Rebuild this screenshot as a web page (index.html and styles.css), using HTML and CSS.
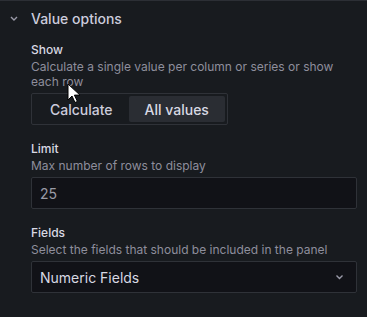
FILE: index.html
```html
<!DOCTYPE html>
<html lang="en">
    <head>
        <meta charset="UTF-8" />
        <meta name="viewport" content="width=device-width, initial-scale=1.0" />
        <title>Value options</title>
        <link rel="stylesheet" href="styles.css">
    </head>
    <body>
        <div class="category">
            <div class="category-header">
                <span class="chevron">
                    <svg width="8" height="5" viewBox="0 0 8 5">
                        <path d="M1 1l3 3 3-3" fill="none" stroke="currentColor" stroke-width="1.4" />
                    </svg>
                </span>
                <span class="category-title">Value options</span>
            </div>

            <div class="field">
                <div class="field-label">Show</div>
                <div class="field-desc">Calculate a single value per column or series or show each row</div>
                <div class="radio-group">
                    <button class="radio-btn">Calculate</button>
                    <button class="radio-btn active">All values</button>
                </div>
            </div>

            <div class="field">
                <div class="field-label">Limit</div>
                <div class="field-desc">Max number of rows to display</div>
                <input class="text-input" type="text" placeholder="25" />
            </div>

            <div class="field">
                <div class="field-label">Fields</div>
                <div class="field-desc">Select the fields that should be included in the panel</div>
                <div class="select">
                    <span class="select-value">Numeric Fields</span>
                    <svg class="select-arrow" width="9" height="6" viewBox="0 0 9 6">
                        <path d="M1.5 1.5l3 3 3-3" fill="none" stroke="currentColor" stroke-width="1.4" />
                    </svg>
                </div>
            </div>
        </div>

        <!-- mouse pointer sitting over the "each row" text -->
        <svg class="pointer" width="14" height="21" viewBox="0 0 14 21">
            <path d="M1 1v16l4-4 3 6.5 2.4-1.1-3-6.3H13z" fill="#fff" stroke="#000" stroke-width="1" stroke-linejoin="round" />
        </svg>
    </body>
</html>
```

FILE: styles.css
```css
body {
    font-family: Inter, "Noto Sans", sans-serif;
    margin: 0;
    padding: 0;
    background-color: #181b1f;
    color: #ccccdc;
    border-top: 1px solid #2c2f35;
    min-height: 316px;
    position: relative;
    overflow: hidden;
}

.category {
    padding: 7px 10px 0 10px;
}

.category-header {
    display: flex;
    align-items: center;
    height: 21px;
}

.chevron {
    width: 21px;
    display: flex;
    align-items: center;
    color: #9a9aa8;
}

.category-title {
    font-size: 14px;
    font-weight: 500;
    line-height: 21px;
}

.category-header + .field {
    margin-top: 13px;
}

.field {
    padding-left: 21px;
    margin-bottom: 16px;
}

.field-label {
    font-size: 12px;
    font-weight: 500;
    line-height: 15px;
    color: #d8d9e3;
}

.field-desc {
    font-size: 12px;
    line-height: 15px;
    margin-top: 2px;
    margin-bottom: 4px;
    color: #8e8e9c;
}

.radio-group {
    display: inline-flex;
    gap: 0;
    padding: 2px;
    border: 1px solid #2f3238;
    border-radius: 2px;
}

.radio-btn {
    font-family: inherit;
    font-size: 14px;
    font-weight: 500;
    height: 26px;
    padding: 0 16px;
    background: none;
    border: none;
    border-radius: 2px;
    color: #ccccdc;
    cursor: pointer;
}

.radio-btn.active {
    background: #2a2d33;
    color: #d8d9e3;
}

.text-input {
    display: block;
    box-sizing: border-box;
    width: 100%;
    height: 32px;
    padding: 0 8px;
    background: #111217;
    border: 1px solid #2f3238;
    border-radius: 2px;
    font-family: inherit;
    font-size: 14px;
    color: #ccccdc;
}

.text-input::placeholder {
    color: #9a9ba6;
}

.select {
    box-sizing: border-box;
    height: 32px;
    padding: 0 12px 0 8px;
    background: #111217;
    border: 1px solid #2f3238;
    border-radius: 2px;
    display: flex;
    align-items: center;
    justify-content: space-between;
    font-size: 14px;
    color: #d8d9e3;
}

.select-arrow {
    color: #9a9aa8;
}

.pointer {
    position: absolute;
    left: 67px;
    top: 82px;
}
```
